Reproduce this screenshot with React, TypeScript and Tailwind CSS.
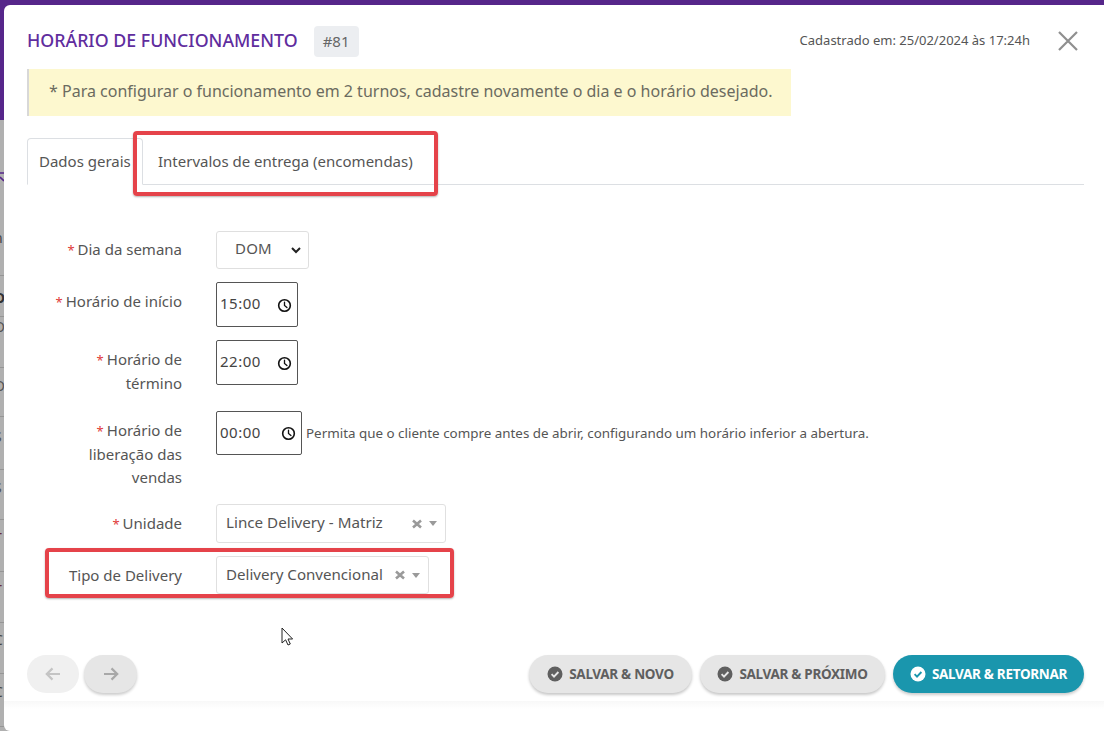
import React from "react";

function Clock() {
  return (
    <svg width="15" height="15" viewBox="0 0 16 16" fill="none" stroke="#111" strokeWidth="1.7" strokeLinecap="round">
      <circle cx="8" cy="8" r="6.2" />
      <path d="M8 4.4V8l2.6 2.2" strokeWidth="1.4" />
    </svg>
  );
}

function Req() {
  return <span className="text-[#e03a3a] text-[13px] mr-[3px]">*</span>;
}

function Check({ bg, fg }: { bg: string; fg: string }) {
  return (
    <svg width="16" height="16" viewBox="0 0 16 16">
      <circle cx="8" cy="8" r="7.5" fill={bg} />
      <path d="M4.6 8.2 7 10.6l4.4-4.6" fill="none" stroke={fg} strokeWidth="1.9" />
    </svg>
  );
}

function Arrow({ left }: { left?: boolean }) {
  return (
    <svg width="18" height="16" viewBox="0 0 18 16" fill="none" stroke="currentColor" strokeWidth="2.2" className={left ? "rotate-180" : ""}>
      <path d="M2 8h13M9.5 2.4 15.2 8l-5.7 5.6" />
    </svg>
  );
}

function SelectEnds() {
  return (
    <span className="flex items-center gap-[7px] ml-auto">
      <svg width="10" height="10" viewBox="0 0 10 10" stroke="#9a9a9a" strokeWidth="2.6">
        <path d="M1 1.5l8 7M9 1.5l-8 7" />
      </svg>
      <span className="w-0 h-0 border-x-[4px] border-x-transparent border-t-[5px] border-t-[#9a9a9a]" />
    </span>
  );
}

function Row({ label, req, className, labelClass, children }: { label: React.ReactNode; req?: boolean; className: string; labelClass?: string; children: React.ReactNode }) {
  return (
    <div className={`flex ${className}`}>
      <div className={`w-[130px] mr-[34px] text-right text-[15px] leading-[23px] text-[#555] ${labelClass ?? ""}`}>
        {req && <Req />}
        {label}
      </div>
      {children}
    </div>
  );
}

function TimeBox({ value, wide }: { value: string; wide?: boolean }) {
  return (
    <div className={`flex items-center border border-[#555] rounded-[2px] pl-[3px] text-[15px] tracking-[0.5px] text-[#444] ${wide ? "w-[86px] h-[44px] pr-[5px]" : "w-[82px] h-[45px] pr-[5px]"}`}>
      <span className="pb-[2px]">{value}</span>
      <span className="ml-auto pt-[1px]">
        <Clock />
      </span>
    </div>
  );
}

function PillButton({ children, w }: { children: React.ReactNode; w: string }) {
  return (
    <button className={`${w} h-[38px] rounded-full bg-[#e6e6e6] shadow-[0_2px_3px_rgba(0,0,0,0.22)] flex items-center justify-center gap-[6px] text-[13.5px] font-bold tracking-[-0.3px] text-[#5f5f5f]`}>
      {children}
    </button>
  );
}

const under = [
  { y: "h-[156px] pt-[111px]", g: "n", c: "text-[#444]" },
  { y: "h-[41px] pt-[15px]", g: "O", c: "font-bold text-[#333]" },
  { y: "h-[51px] pt-[3px]", g: "O", c: "text-[#555]" },
  { y: "h-[49px] pt-[11px]", g: "O", c: "text-[#555]" },
  { y: "h-[53px] pt-[13px]", g: "S", c: "text-[#555]" },
  { y: "h-[50px] pt-[11px]", g: "S", c: "text-[#555]" },
  { y: "h-[52px] pt-[11px]", g: "T", c: "text-[#6b2b3b]" },
  { y: "h-[51px] pt-[11px]", g: "T", c: "text-[#6b2b3b]" },
  { y: "h-[51px] pt-[10px]", g: "C", c: "text-[#444]" },
  { y: "h-[53px] pt-[11px]", g: "C", c: "text-[#444]" },
];

export default function App() {
  return (
    <div
      className="relative w-[1104px] h-[731px] overflow-hidden bg-[#b0b0b0] pt-[5px] pl-[4px] text-[#555]"
      style={{ fontFamily: "'Noto Sans', Roboto, sans-serif" }}
    >
      <div className="absolute left-0 top-0 w-full h-[120px] bg-[#56268a]" />
      <div className="absolute left-0 top-[120px] w-[4px] flex flex-col overflow-hidden">
        {under.map((r, i) => (
          <div key={i} className={`${r.y} shrink-0 border-b border-[#969696] flex items-start overflow-hidden`}>
            <span className={`-ml-[6px] text-[14px] leading-none ${r.c}`}>{r.g}</span>
          </div>
        ))}
      </div>
      <svg className="absolute left-0 top-[171px]" width="4" height="12" viewBox="0 0 4 12" fill="none" stroke="#56268a" strokeWidth="1.6">
        <path d="M0 2h4M0 6l4 4" />
      </svg>
      <div className="relative h-full bg-white rounded-tl-[6px] rounded-bl-[6px] flex flex-col">
        <div className="flex items-center pl-[23px] pr-[25px] pt-[7px] h-[64px] shrink-0">
          <span className="text-[17.8px] font-medium text-[#5f2d9e]">HORÁRIO DE FUNCIONAMENTO</span>
          <span className="ml-[16px] mt-[2px] px-[9px] h-[31px] flex items-center rounded-[4px] bg-[#eceef1] text-[15px] text-[#666]">#81</span>
          <span className="ml-auto text-[13px] text-[#555]">Cadastrado em: 25/02/2024 às 17:24h</span>
          <svg className="ml-[27px]" width="22" height="22" viewBox="0 0 22 22" stroke="#8f8f8f" strokeWidth="2.2">
            <path d="M2 2l18 18M20 2 2 20" />
          </svg>
        </div>

        <div className="ml-[23px] w-[764px] h-[47px] bg-[#fdf8cf] border-l-[2px] border-[#d8d8d8] flex items-center pl-[20px] pb-[3px] text-[16px] text-[#6b6b60]">
          * Para configurar o funcionamento em 2 turnos, cadastre novamente o dia e o horário desejado.
        </div>

        <div className="ml-[23px] mr-[20px] mt-[22px] h-[47px] flex items-stretch border-b border-[#dcdfe3] text-[15px] shrink-0">
          <div className="w-[116px] pl-[11px] flex items-center border border-[#dcdfe3] border-b-white rounded-t-[4px] h-[47px] bg-white">Dados gerais</div>
          <div className="pl-[15px] flex items-center">Intervalos de entrega (encomendas)</div>
        </div>

        <div className="pl-[48px] pt-[46px] flex flex-col">
          <Row req label="Dia da semana" className="h-[38px] items-center">
            <div className="w-[93px] h-[38px] border border-[#dfdfdf] rounded-[3px] flex items-center pl-[18px] pr-[6px] text-[15px] tracking-[0.2px] text-[#555]">
              <span className="pb-[3px]">DOM</span>
              <svg className="ml-auto" width="12" height="12" viewBox="0 0 12 12" fill="none" stroke="#222" strokeWidth="2">
                <path d="M2 4l4 4 4-4" />
              </svg>
            </div>
          </Row>
          <Row req label="Horário de início" labelClass="pt-[8px]" className="mt-[13px] h-[45px]">
            <TimeBox value="15:00" />
          </Row>
          <Row req label="Horário de término" labelClass="pt-[8px]" className="mt-[13px] h-[45px]">
            <TimeBox value="22:00" />
          </Row>
          <Row req label="Horário de liberação das vendas" labelClass="pt-[8px]" className="mt-[26px] h-[69px]">
            <TimeBox value="00:00" wide />
            <span className="ml-[4px] mt-[11px] text-[13.4px] leading-[23px] text-[#555]">
              Permita que o cliente compre antes de abrir, configurando um horário inferior a abertura.
            </span>
          </Row>
          <Row req label="Unidade" className="mt-[24px] h-[39px] items-center">
            <div className="w-[230px] h-[39px] border border-[#e0e0e0] rounded-[3px] flex items-center pl-[9px] pr-[8px] text-[15.2px] text-[#555]">
              <span className="pb-[2px]">Lince Delivery - Matriz</span>
              <SelectEnds />
            </div>
          </Row>
          <Row label="Tipo de Delivery" className="mt-[13px] h-[38px] items-center">
            <div className="w-[213px] h-[38px] border border-[#e0e0e0] rounded-[3px] flex items-center pl-[9px] pr-[8px] text-[15.1px] text-[#555]">
              <span className="pb-[2px]">Delivery Convencional</span>
              <SelectEnds />
            </div>
          </Row>
        </div>

        <div className="flex items-center pl-[23px] pr-[20px] mt-[61px]">
          <button className="w-[52px] h-[38px] rounded-full bg-[#f0f0f0] flex items-center justify-center text-[#c4c4c4]">
            <Arrow left />
          </button>
          <button className="ml-[5px] w-[53px] h-[38px] rounded-full bg-[#e6e6e6] shadow-[0_2px_3px_rgba(0,0,0,0.2)] flex items-center justify-center text-[#a8a8a8]">
            <Arrow />
          </button>
          <div className="ml-auto flex gap-[8px]">
            <PillButton w="w-[163px]"><Check bg="#5f5f5f" fg="#e6e6e6" />SALVAR &amp; NOVO</PillButton>
            <PillButton w="w-[185px]"><Check bg="#5f5f5f" fg="#e6e6e6" />SALVAR &amp; PRÓXIMO</PillButton>
            <button className="w-[191px] h-[38px] rounded-full bg-[#1a96ad] shadow-[0_2px_3px_rgba(0,0,0,0.2)] flex items-center justify-center gap-[6px] text-[13.5px] font-bold tracking-[-0.3px] text-white">
              <Check bg="#ffffff" fg="#1a96ad" />SALVAR &amp; RETORNAR
            </button>
          </div>
        </div>

        <div className="mt-[8px] h-[8px] bg-gradient-to-b from-[#f8f8f8] to-white" />
      </div>

      <div className="absolute left-[133px] top-[131px] w-[305px] h-[65px] border-[4px] border-[#e5434a] rounded-[4px] shadow-[0_1px_2px_rgba(0,0,0,0.3)]" />
      <div className="absolute left-[45px] top-[548px] w-[409px] h-[50px] border-[4px] border-[#e5434a] rounded-[4px] shadow-[0_1px_2px_rgba(0,0,0,0.3)]" />
      <svg className="absolute left-[281px] top-[627px]" width="13" height="20" viewBox="0 0 13 20" fill="#fff" stroke="#222" strokeWidth="1">
        <path d="M1 1v15l3.6-3.2L7 18l2.3-1-2.3-5h4.6z" />
      </svg>
    </div>
  );
}
